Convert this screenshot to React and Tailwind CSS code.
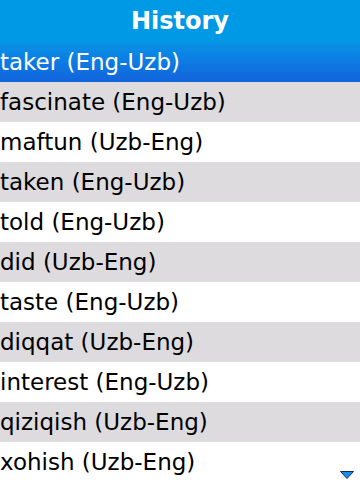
import React from 'react'

const items = [
  'taker (Eng-Uzb)',
  'fascinate (Eng-Uzb)',
  'maftun (Uzb-Eng)',
  'taken (Eng-Uzb)',
  'told (Eng-Uzb)',
  'did (Uzb-Eng)',
  'taste (Eng-Uzb)',
  'diqqat (Uzb-Eng)',
  'interest (Eng-Uzb)',
  'qiziqish (Uzb-Eng)',
  'xohish (Uzb-Eng)',
]

const App = () => {
  return (
    <div className="relative w-[360px] h-[480px] overflow-hidden bg-white font-['DejaVu_Sans',sans-serif]">
      {/* header */}
      <div className="h-[42px] bg-[#0099e6] flex items-center justify-center">
        <span className="text-white text-[24px] font-bold leading-none">History</span>
      </div>

      {/* list */}
      <div className="flex flex-col">
        {items.map((item, i) => (
          <div
            key={item}
            className={`h-10 flex items-center text-[23px] leading-none whitespace-nowrap ${
              i === 0
                ? 'bg-gradient-to-b from-[#0a92e7] to-[#1463dc] text-white'
                : i % 2 === 1
                ? 'bg-[#dddbde] text-black'
                : 'bg-white text-black'
            }`}
          >
            {item}
          </div>
        ))}
      </div>

      {/* scroll arrow */}
      <svg className="absolute left-[340px] top-[471px]" width="14" height="8" viewBox="0 0 14 8">
        <path d="M0.5 0.5 H13.5 L7 7.5 Z" fill="#1a8fe6" stroke="#13305a" strokeWidth="1" />
      </svg>
    </div>
  )
}

export default App
